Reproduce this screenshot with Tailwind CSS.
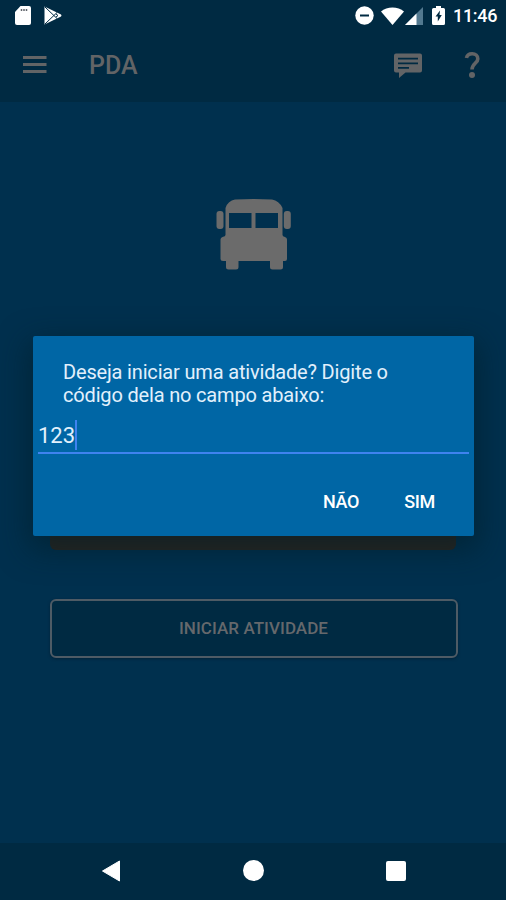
<!DOCTYPE html>
<html lang="pt-BR">
<head>
<meta charset="utf-8">
<title>PDA</title>
<script src="https://cdn.jsdelivr.net/npm/@tailwindcss/browser@4"></script>
</head>
<body class="font-['Roboto',sans-serif]">
<div class="relative flex h-[900px] w-[506px] flex-col overflow-hidden bg-[#00304e]">
  <header class="h-[102px] shrink-0 bg-[#002a42]">
    <div class="flex h-8 items-center justify-between pr-[8px] pl-[14px] text-white">
      <div class="flex items-center gap-[13px] pb-px">
        <svg class="h-[19px] w-[17px]" viewBox="0 0 17 19"><path fill="#fff" d="M6.500 0H15a2 2 0 0 1 2 2v15a2 2 0 0 1-2 2H3a2 2 0 0 1-2-2V6z"/><path stroke="#60656b" stroke-width="1.500" d="M7.500 3v2M10 3v2M12.500 3v2"/></svg>
        <svg class="h-[19px] w-[18px]" viewBox="0 0 18 19"><path fill="#fff" d="M.5.5 17 8.500q1 1 0 2L.5 18.500z"/><path fill="none" stroke="#002a42" stroke-width="1" d="m1 1 12 11.500M1 18 13 6.500M12 8l2 1.500-2 1.500"/></svg>
      </div>
      <div class="flex items-center pb-px">
        <svg class="h-[19px] w-[19px]" viewBox="0 0 19 19"><circle cx="9.500" cy="9.500" r="9.200" fill="#fff"/><path stroke="#002a42" stroke-width="2" d="M5 9.500h9"/></svg>
        <svg class="ml-[7px] h-[18px] w-[23px]" viewBox="0 0 23 18"><path fill="#fff" d="M0 4.500C6-.8 17-.8 23 4.500L11.500 18z"/></svg>
        <svg class="ml-[1px] h-[18px] w-[18px]" viewBox="0 0 18 18"><path fill="#527990" d="M18 0v18H0z"/><path fill="#fff" d="M11.500 6.500V18H0z"/></svg>
        <svg class="ml-[9px] h-[19px] w-[13px]" viewBox="0 0 13 19"><path fill="#fff" d="M4 0h5v2h2.500Q13 2 13 3.500v14q0 1.500-1.500 1.500h-10Q0 19 0 17.500v-14Q0 2 1.500 2H4z"/><path fill="#002a42" d="M8 4.500 3.500 10.500h2.300v5L9.800 9H7.500z"/></svg>
        <span class="ml-[8px] w-[45px] pt-px text-[18px] leading-8 font-medium tracking-[-0.3px] whitespace-nowrap">11:46</span>
      </div>
    </div>
    <div class="flex h-[66px] items-center text-[#626466]">
      <svg class="ml-[23px] h-[18px] w-[24px]" viewBox="0 0 24 18"><path stroke="currentColor" stroke-width="3" d="M0 1.500h23.500M0 8.500h23.500M0 15.500h23.500"/></svg>
      <h1 class="ml-[42px] pt-[2px] text-[25px] font-medium">PDA</h1>
      <svg class="ml-auto h-[28px] w-[28px]" viewBox="0 0 28 28"><path fill="currentColor" d="M2 2.500h24q2 0 2 2v15q0 2-2 2H11.500L5 27v-5.500H2q-2 0-2-2v-15q0-2 2-2z"/><path stroke="#002a42" stroke-width="1.800" d="M4 7.700h20M4 12.300h20M4 16.800h11"/></svg>
      <svg class="mr-[25px] ml-[42px] h-[28px] w-[17px]" viewBox="0 0 17 28"><path fill="none" stroke="currentColor" stroke-width="3.600" d="M2.500 7C3 4.200 5 2.800 8.200 2.800s5.600 1.700 5.600 5.100c0 4.200-5.800 4.900-5.800 10.600"/><circle cx="8" cy="24" r="3" fill="currentColor"/></svg>
    </div>
  </header>
  <main class="flex flex-1 flex-col items-center pt-[96px]">
    <svg class="h-[72px] w-[76px] shrink-0" viewBox="0 0 76 72"><path fill="#6b6b6b" fill-rule="evenodd" d="M20 1.500Q38.500.5 57 1.500q7 1 10.500 8.500V37q0 1.500 2.500 2 2 .5 2 2.500V61q0 2-2 2h-2v6q0 2.500-2.500 2.500h-8Q55 71.500 55 69v-6H23.500v6q0 2.500-2.500 2.500h-7.500q-2.500 0-2.500-2.500v-6H8q-2.500 0-2.500-2V41.500q0-2 2-2.500 3-.5 3-2V10Q13 2.500 20 1.500zM14 15v15h22.500V15zm26.500 0v15H63V15z"/><rect x="1.500" y="13" width="7" height="18" rx="3" fill="#6b6b6b"/><rect x="68.800" y="13" width="7" height="18" rx="3" fill="#6b6b6b"/></svg>
    <div class="mt-[222px] h-[58px] w-[406px] shrink-0 rounded-[6px] bg-[#2b2620]"></div>
    <button class="mt-[49px] ml-px h-[59px] w-[408px] shrink-0 rounded-[6px] border-2 border-[#4e5b65] bg-[#002a42] pt-px text-[17px] font-medium tracking-[0.06px] text-[#65686c] shadow-[0_1px_3px_#00233a]">INICIAR ATIVIDADE</button>
  </main>
  <nav class="flex h-[57px] shrink-0 items-center justify-between bg-[#002a42] pr-[100px] pb-[2px] pl-[101px]">
    <svg class="h-[22px] w-[20px]" viewBox="0 0 20 22"><path fill="#fff" stroke="#fff" stroke-linejoin="round" d="M1.500 11 18.500 1v20z"/></svg>
    <div class="h-[21px] w-[21px] rounded-full bg-white"></div>
    <div class="h-[20px] w-[20px] rounded-[2px] bg-white"></div>
  </nav>
  <section role="dialog" class="absolute top-[335.500px] left-[33px] flex h-[200.500px] w-[441px] flex-col rounded-[2px] bg-[#0066a5] text-white shadow-[0_10px_30px_4px_rgba(0,30,40,0.6)]">
    <p class="pt-[25.500px] pl-[30px] text-[20px] leading-[23px] tracking-[-0.170px] whitespace-nowrap text-[#e2f0fc]">Deseja iniciar uma atividade? Digite o<br>código dela no campo abaixo:</p>
    <div class="mx-[5px] mt-[10px] flex h-[37px] items-center border-b-[2px] border-[#3f83ef] text-[22px] text-[#e2f0fc]"><span class="pt-[2px]">123</span><span class="h-[30px] w-[2px] bg-[#3f83ef]"></span></div>
    <div class="mt-[37px] flex justify-end gap-[45px] pr-[39px] text-[18px] leading-[22px] font-medium tracking-[-0.300px]"><button>NÃO</button><button>SIM</button></div>
  </section>
</div>
</body>
</html>
